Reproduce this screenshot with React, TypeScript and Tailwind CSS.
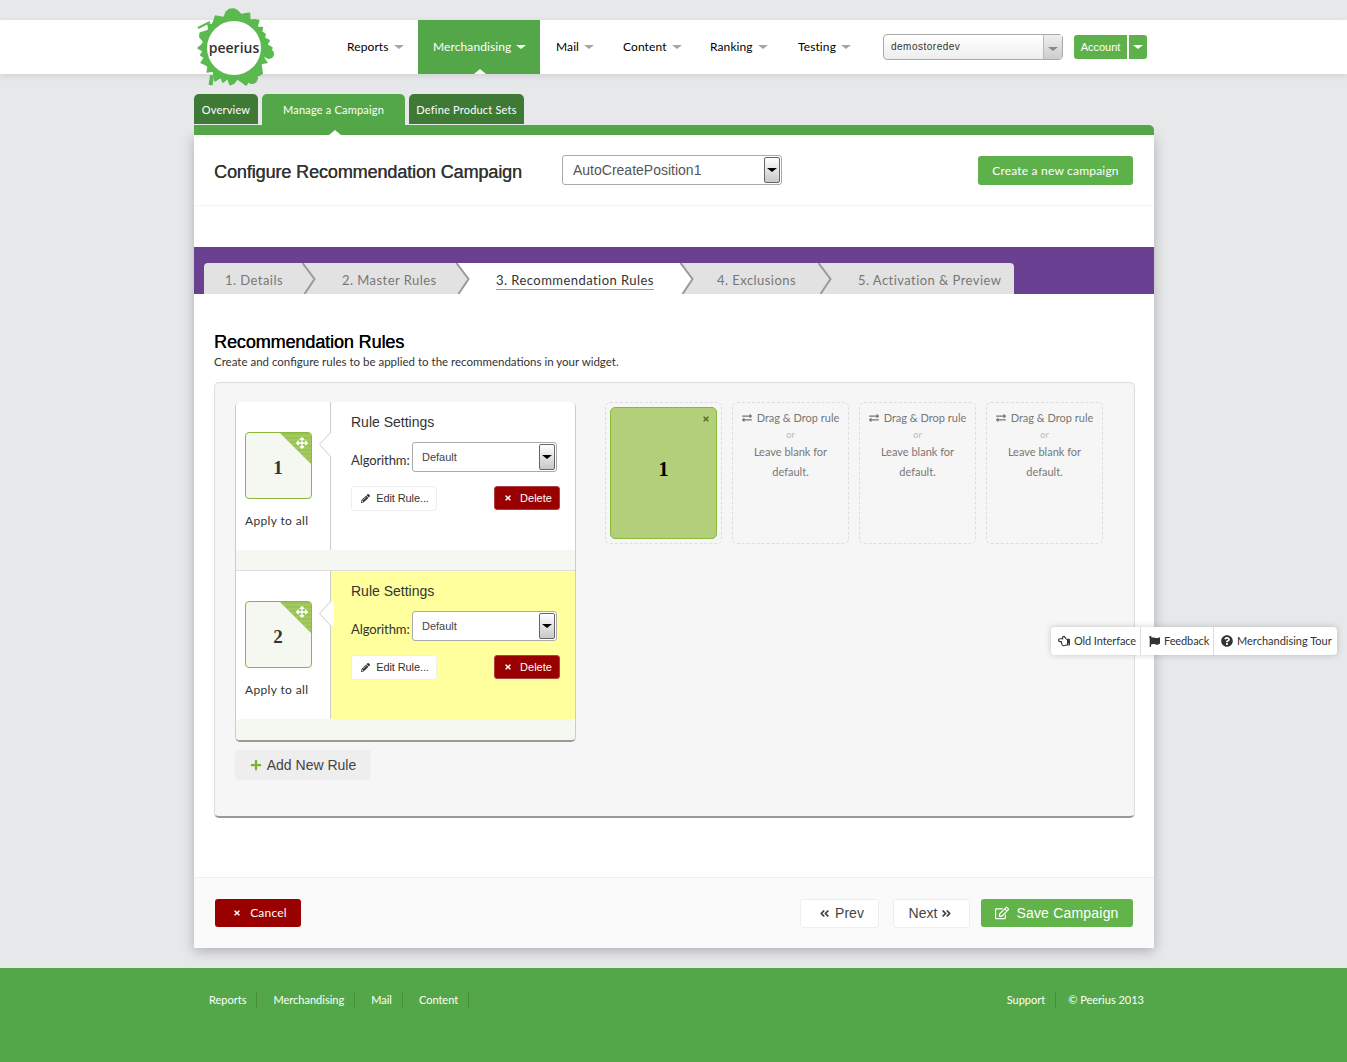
import {
  FaArrowsAlt,
  FaAngleDoubleLeft,
  FaAngleDoubleRight,
  FaExchangeAlt,
  FaFlag,
  FaPencilAlt,
  FaPlus,
  FaQuestionCircle,
  FaRegEdit,
  FaRegHandPointLeft,
  FaTimes,
} from "react-icons/fa";

const ui = "font-['Lato',sans-serif]";
const arial = "font-['Liberation_Sans',Arial,sans-serif]";

const navItems = [
  { label: "Reports", w: "w-[71px]" },
  { label: "Merchandising", w: "w-[122px]", active: true },
  { label: "Mail", w: "w-[67px]" },
  { label: "Content", w: "w-[87px]" },
  { label: "Ranking", w: "w-[88px]" },
  { label: "Testing", w: "w-[85px]" },
];

const steps = [
  { label: "1. Details", w: "w-[98px]", pl: "pl-[21px]" },
  { label: "2. Master Rules", w: "w-[140px]", pl: "pl-[26px]" },
  { label: "3. Recommendation Rules", w: "w-[210px]", pl: "pl-[26px]", active: true },
  { label: "4. Exclusions", w: "w-[124px]", pl: "pl-[23px]" },
  { label: "5. Activation & Preview", w: "w-[182px]", pl: "pl-[26px]", last: true },
];

// outline radius every 6 degrees, clockwise from the top
const logoRadii = [
  39, 37, 34, 36, 38, 32, 35, 37, 31, 35, 32, 34, 32, 36, 33, 38, 35, 32, 31, 36,
  31, 34, 38, 37, 33, 31, 36, 39, 34, 31, 35, 37, 31, 36, 32, 38, 34, 31, 36, 32,
  33, 36, 31, 34, 31, 36, 32, 31, 36, 37, 33, 31, 35, 32, 34, 37, 34, 32, 37, 39,
];

const logoPoints = logoRadii
  .map((r, i) => {
    const a = (i * 6 * Math.PI) / 180;
    return `${(Math.sin(a) * r).toFixed(1)},${(-Math.cos(a) * r).toFixed(1)}`;
  })
  .join(" ");

function Caret({ className = "border-t-[#a5a5a5]" }: { className?: string }) {
  return (
    <span
      className={`inline-block w-0 h-0 border-x-[5px] border-x-transparent border-t-[4px] ${className}`}
    />
  );
}

function Logo() {
  return (
    <svg width="84" height="84" viewBox="-42 -42 84 84" className="block">
      <polygon points={logoPoints} fill="#5ab94f" stroke="#5ab94f" strokeWidth="1.5" strokeLinejoin="round" />
      <line x1="-24" y1="-26" x2="-36" y2="-20" stroke="#5ab94f" strokeWidth="2" />
      <rect x="-20" y="30" width="4" height="10" fill="#5ab94f" transform="rotate(8)" />
      <circle cx="18" cy="30" r="6" fill="#5ab94f" />
      <circle cx="35" cy="6" r="5" fill="#5ab94f" />
      <circle r="27" fill="#ffffff" />
    </svg>
  );
}

function SelectArrow() {
  return (
    <span className="flex items-center justify-center w-[16px] self-stretch border border-[#666] rounded-[2px] bg-gradient-to-b from-white to-[#c8c8c8]">
      <Caret className="border-t-black" />
    </span>
  );
}

function Chevron({ left, right }: { left: string; right: string }) {
  return (
    <svg width="14" height="31" viewBox="0 0 14 31" className="block shrink-0">
      <rect width="14" height="31" fill={right} />
      <polygon points="0,0 12,16 2,31 0,31" fill={left} />
      <polyline points="0.5,0 12.5,16 2.5,31" fill="none" stroke="#9a9a9a" strokeWidth="2" />
    </svg>
  );
}

function Tile({ n }: { n: number }) {
  return (
    <div className="relative w-[67px] h-[67px] rounded-[4px] border border-[#8ab93a] bg-[#f5f8f0] overflow-hidden flex items-center justify-center">
      <svg width="31" height="31" viewBox="0 0 31 31" className="absolute top-0 right-0">
        <polygon points="0,0 31,0 31,31" fill="#9ac255" />
        {[3, 7, 11, 15, 19, 23, 27].map((y) => (
          <line key={y} x1={y} x2="31" y1={y} y2={y} stroke="#acd06c" strokeWidth="1" />
        ))}
      </svg>
      <FaArrowsAlt className="absolute top-[4px] right-[3px] text-white text-[12px]" />
      <span className="font-['Liberation_Serif',serif] font-bold text-[19px] text-[#333] mt-[5px] mr-[1px]">{n}</span>
    </div>
  );
}

function RuleRow({ n, highlight }: { n: number; highlight?: boolean }) {
  return (
    <div className="flex h-[148px]">
      <div className="w-[95px] shrink-0 pl-[9px] pt-[30px] bg-white border-r border-[#ccc] relative">
        <Tile n={n} />
        <div className={`${ui} text-[12px] tracking-[0.35px] text-[#333] mt-[13px]`}>Apply to all</div>
        <svg width="15" height="25" viewBox="0 0 15 25" className="absolute top-[30px] left-[83px]">
          {highlight && <rect x="11" width="4" height="25" fill="#fff" />}
          <polygon points="0,12.5 12,0 12,25" fill="#fff" />
          <polyline points="12,0 0.5,12.5 12,25" fill="none" stroke="#ccc" />
        </svg>
      </div>
      <div className={`flex-1 pl-[20px] pr-[15px] pt-[12px] ${highlight ? "bg-[#ffff9e]" : "bg-white"}`}>
        <div className={`${arial} text-[14px] leading-[16px] text-[#333]`}>Rule Settings</div>
        <div className="flex items-center mt-[12px] mr-[3px]">
          <span className={`${ui} text-[13px] tracking-[-0.1px] text-[#333] mt-[7px] w-[61px] shrink-0`}>Algorithm:</span>
          <div className="flex-1 h-[30px] flex items-stretch justify-between rounded-[3px] border border-[#aaa] bg-white p-[1px] pl-[9px]">
            <span className={`${arial} text-[11px] self-center text-[#444]`}>Default</span>
            <SelectArrow />
          </div>
        </div>
        <div className="flex justify-between mt-[14px]">
          <button className={`${arial} h-[25px] w-[86px] flex items-center justify-center gap-[6px] bg-white border border-[#eee] rounded-[3px] text-[11px] tracking-[-0.1px] text-[#333] pl-[2px]`}>
            <FaPencilAlt className="text-[9px]" />
            Edit Rule...
          </button>
          <button className={`${arial} h-[24px] w-[66px] flex items-center justify-center gap-[8px] bg-[#990000] border border-[#b04040] rounded-[3px] text-[11px] text-white pl-[2px]`}>
            <FaTimes className="text-[8px]" />
            Delete
          </button>
        </div>
      </div>
    </div>
  );
}

function EmptySlot() {
  return (
    <div className={`${ui} w-[117px] h-[142px] rounded-[5px] border border-dashed border-[#ddd] pt-[7px] text-center text-[11px] text-[#777]`}>
      <div className="flex items-center justify-center gap-[5px] leading-[16px]">
        <FaExchangeAlt className="text-[10px]" />
        Drag &amp; Drop rule
      </div>
      <div className="italic text-[#bbb] text-[10px] leading-[15px] mt-[1px]">or</div>
      <div className="leading-[20px] px-[14px]">Leave blank for default.</div>
    </div>
  );
}

export default function App() {
  return (
    <div className={`${ui} relative h-[1062px] bg-[#e7e8ea] overflow-hidden flex flex-col`}>
      <header className="mt-[20px] h-[54px] bg-white shadow-[0_2px_6px_rgba(0,0,0,0.1)] relative shrink-0">
        <div className="absolute left-[192px] -top-[14px]">
          <Logo />
          <span className="absolute left-[16px] top-[32px] w-[52px] text-center font-['Open_Sans',sans-serif] font-semibold text-[14px] leading-[20px] text-[#333]">
            peerius
          </span>
        </div>
        <div className="flex h-full pl-[347px]">
          <nav className="flex">
            {navItems.map((item) => (
              <div
                key={item.label}
                className={`${item.w} h-full relative flex items-center gap-[5px] text-[12px] tracking-[0.1px] ${
                  item.active ? "bg-[#54a748] text-white pl-[15px]" : "text-black"
                } ${item.label === "Reports" ? "" : item.active ? "" : "pl-[16px]"}`}
              >
                {item.label}
                <Caret className={item.active ? "border-t-white" : "border-t-[#a5a5a5]"} />
                {item.active && (
                  <span className="absolute bottom-0 left-[56px] w-0 h-0 border-x-[6px] border-x-transparent border-b-[5px] border-b-white" />
                )}
              </div>
            ))}
          </nav>
          <div className="ml-[16px] mt-[14px] w-[180px] h-[26px] flex rounded-[4px] border border-[#aaa] bg-gradient-to-b from-white to-[#eee]">
            <span className={`${arial} flex-1 pl-[7px] text-[10px] tracking-[0.5px] leading-[24px] text-[#333]`}>demostoredev</span>
            <span className="w-[19px] border-l border-[#bbb] bg-gradient-to-b from-[#eee] to-[#ccc] flex items-center justify-center">
              <Caret className="border-t-[#888] mt-[3px]" />
            </span>
          </div>
          <div className="flex ml-[11px] mt-[15px] h-[24px] gap-[2px]">
            <button className={`${arial} w-[53px] bg-[#5eb14a] rounded-l-[3px] text-[11px] text-white`}>Account</button>
            <button className="w-[18px] bg-[#5eb14a] rounded-r-[3px] flex items-center justify-center">
              <Caret className="border-t-white" />
            </button>
          </div>
        </div>
      </header>

      <main className="w-[960px] ml-[194px] mt-[20px] shrink-0">
        <div className="flex gap-[4px] text-[11px] tracking-[0.2px] text-white">
          <div className="w-[64px] h-[30px] pt-[2px] bg-[#3e7a35] rounded-t-[5px] flex items-center justify-center">Overview</div>
          <div className="w-[143px] h-[31px] pt-[1px] bg-[#54a748] rounded-t-[5px] flex items-center justify-center">Manage a Campaign</div>
          <div className="w-[115px] h-[30px] pt-[2px] bg-[#3e7a35] rounded-t-[5px] flex items-center justify-center">Define Product Sets</div>
        </div>
        <div className="h-[10px] bg-[#54a748] rounded-tr-[5px] relative">
          <span className="absolute bottom-0 left-[135px] w-0 h-0 border-x-[6px] border-x-transparent border-b-[5px] border-b-white" />
        </div>

        <section className="bg-white h-[813px] flex flex-col shadow-[0_3px_12px_rgba(0,0,0,0.25)]">
          <div className="h-[71px] shrink-0 border-b border-[#f4f4f4] flex pl-[20px] pr-[21px] pt-[20px]">
            <h1 className={`${arial} w-[348px] text-[18px] leading-[34px] tracking-[-0.1px] font-normal [text-shadow:0.3px_0_0_#333] text-[#333]`}>
              Configure Recommendation Campaign
            </h1>
            <div className="w-[220px] h-[30px] flex justify-between rounded-[3px] border border-[#aaa] p-[1px] pl-[10px]">
              <span className={`${arial} self-center text-[14px] text-[#555]`}>AutoCreatePosition1</span>
              <SelectArrow />
            </div>
            <button className="ml-auto w-[155px] h-[29px] mt-[1px] bg-[#5eb14a] rounded-[3px] text-[12px] tracking-[0.2px] text-white">
              Create a new campaign
            </button>
          </div>

          <div className="mt-[41px] h-[47px] shrink-0 bg-[#694092] pt-[16px] pl-[10px]">
            <div className="flex">
              {steps.map((s, i) => (
                <div key={s.label} className="flex">
                  <div
                    className={`${s.w} ${s.pl} h-[31px] pt-[3px] flex items-center text-[13px] tracking-[0.45px] ${
                      s.active ? "bg-white text-[#333]" : "bg-[#e2e2e2] text-[#777]"
                    } ${i === 0 ? "rounded-tl-[4px]" : ""} ${s.last ? "rounded-tr-[4px]" : ""}`}
                  >
                    <span className={s.active ? "border-b border-[#8ab93a] leading-[18px]" : "leading-[18px]"}>{s.label}</span>
                  </div>
                  {!s.last && (
                    <Chevron
                      left={s.active ? "#ffffff" : "#e2e2e2"}
                      right={steps[i + 1].active ? "#ffffff" : "#e2e2e2"}
                    />
                  )}
                </div>
              ))}
            </div>
          </div>

          <div className="px-[20px] flex-1 pt-[38px]">
            <h2 className={`${arial} text-[18px] leading-[20px] tracking-[-0.1px] font-normal text-black [text-shadow:0.3px_0_0_#000]`}>Recommendation Rules</h2>
            <p className="text-[11.5px] leading-[20px] text-[#333]">
              Create and configure rules to be applied to the recommendations in your widget.
            </p>
            <div className="mt-[10px] w-[921px] h-[436px] rounded-[5px] border border-[#ddd] border-b-2 border-b-[#999] bg-[#f6f6f6] pt-[19px] pl-[20px] flex items-start">
              <div className="w-[341px]">
                <div className="rounded-[5px] overflow-hidden border-x border-[#ccc] border-b-2 border-b-[#999] bg-white">
                  <RuleRow n={1} />
                  <div className="h-[21px] bg-[#f5f8f0] border-b border-[#ddd]" />
                  <RuleRow n={2} highlight />
                  <div className="h-[21px] bg-[#f5f8f0] rounded-t-[5px]" />
                </div>
                <button className={`${arial} mt-[8px] w-[136px] h-[30px] bg-[#eee] rounded-[3px] flex items-center justify-center gap-[5px] text-[14px] text-[#444]`}>
                  <FaPlus className="text-[#7fb135] text-[12px]" />
                  Add New Rule
                </button>
              </div>
              <div className="ml-[29px] flex gap-[10px]">
                <div className="w-[117px] h-[142px] rounded-[5px] border border-dashed border-[#ddd] p-[4px]">
                  <div className="relative h-full pb-[8px] rounded-[5px] border border-[#8ab93a] bg-[#b2d07a] flex items-center justify-center">
                    <span className="font-['Liberation_Serif',serif] font-bold text-[20px] text-black">1</span>
                    <FaTimes className="absolute top-[7px] right-[6px] text-[#5c6b2a] text-[8px]" />
                  </div>
                </div>
                <EmptySlot />
                <EmptySlot />
                <EmptySlot />
              </div>
            </div>
          </div>

          <div className="h-[71px] shrink-0 border-t border-[#eee] bg-[#fafafa] flex items-start pt-[21px] pl-[21px] pr-[21px]">
            <button className="w-[86px] h-[28px] bg-[#990000] rounded-[3px] flex items-center justify-center gap-[9px] text-[12px] tracking-[0.2px] text-white pl-[4px]">
              <FaTimes className="text-[8px]" />
              Cancel
            </button>
            <button className={`${arial} ml-auto w-[79px] h-[29px] bg-white border border-[#eee] rounded-[3px] flex items-center justify-center gap-[5px] text-[14px] text-[#444] pl-[4px]`}>
              <FaAngleDoubleLeft className="text-[11px]" />
              Prev
            </button>
            <button className={`${arial} ml-[14px] w-[77px] h-[29px] bg-white border border-[#eee] rounded-[3px] flex items-center justify-center gap-[4px] text-[14px] text-[#444] pr-[2px]`}>
              Next
              <FaAngleDoubleRight className="text-[11px]" />
            </button>
            <button className={`${arial} ml-[11px] w-[152px] h-[28px] bg-[#62b34a] rounded-[3px] flex items-center justify-center gap-[7px] text-[14px] tracking-[0.2px] text-white`}>
              <FaRegEdit className="text-[14px]" />
              Save Campaign
            </button>
          </div>
        </section>
      </main>

      <footer className="mt-[20px] flex-1 bg-[#54a748] text-[11px] text-white">
        <div className="w-[960px] ml-[194px] flex justify-between pt-[24px] pl-[15px] pr-[10px]">
          <div className="flex">
            {["Reports", "Merchandising", "Mail", "Content"].map((l) => (
              <span key={l} className="pr-[10px] mr-[16px] border-r border-[#478f3c] leading-[16px] last:mr-0">{l}</span>
            ))}
          </div>
          <div className="flex">
            <span className="pr-[10px] mr-[12px] border-r border-[#478f3c] leading-[16px]">Support</span>
            <span className="leading-[16px]">© Peerius 2013</span>
          </div>
        </div>
      </footer>

      <div className="absolute left-[1051px] top-[627px] h-[28px] flex bg-white rounded-[4px] shadow-[0_0_6px_rgba(0,0,0,0.2)] text-[11px] text-[#333]">
        <div className="w-[90px] pl-[7px] flex items-center gap-[4px] border-r border-[#ddd] tracking-[-0.1px]">
          <FaRegHandPointLeft className="text-[12px]" />
          Old Interface
        </div>
        <div className="w-[73px] pl-[8px] flex items-center gap-[4px] border-r border-[#ddd] tracking-[-0.1px]">
          <FaFlag className="text-[11px]" />
          Feedback
        </div>
        <div className="w-[123px] pl-[7px] flex items-center gap-[4px]">
          <FaQuestionCircle className="text-[12px]" />
          Merchandising Tour
        </div>
      </div>
    </div>
  );
}
